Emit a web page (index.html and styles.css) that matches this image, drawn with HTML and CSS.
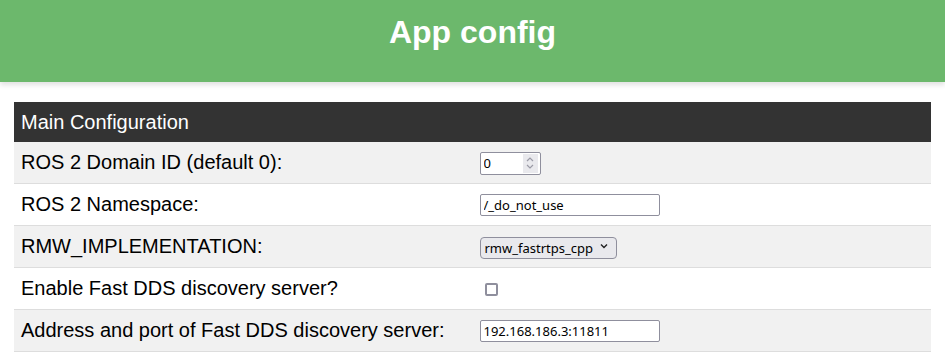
FILE: index.html
```html
<!DOCTYPE html>
<html lang="en">
<head>
    <meta charset="UTF-8">
    <meta name="viewport" content="width=device-width, initial-scale=1.0">
    <title>App config</title>
    <link rel="stylesheet" href="styles.css">
</head>
<body>
    <div class="header">
        <h1>App config</h1>
    </div>

    <div class="content">
        <table class="config">
            <tr>
                <th colspan="2">Main Configuration</th>
            </tr>
            <tr>
                <td>ROS 2 Domain ID (default 0):</td>
                <td>
                    <span class="numbox">
                        <input type="number" id="domain_id" value="0" class="num">
                        <span class="spin">
                            <svg width="10" height="16" viewBox="0 0 10 16">
                                <path d="M2 6 L5 3 L8 6" fill="none" stroke="#9a9aa6" stroke-width="1.2"/>
                                <path d="M2 10 L5 13 L8 10" fill="none" stroke="#9a9aa6" stroke-width="1.2"/>
                            </svg>
                        </span>
                    </span>
                </td>
            </tr>
            <tr>
                <td>ROS 2 Namespace:</td>
                <td><input type="text" id="namespace" value="/_do_not_use" class="txt"></td>
            </tr>
            <tr>
                <td>RMW_IMPLEMENTATION:</td>
                <td>
                    <span class="selbox">
                        <select id="rmw">
                            <option>rmw_fastrtps_cpp</option>
                            <option>rmw_cyclonedds_cpp</option>
                        </select>
                        <svg class="arrow" width="8" height="6" viewBox="0 0 8 6">
                            <path d="M1 1.5 L4 4.5 L7 1.5" fill="none" stroke="#222" stroke-width="1.4"/>
                        </svg>
                    </span>
                </td>
            </tr>
            <tr>
                <td>Enable Fast DDS discovery server?</td>
                <td><input type="checkbox" id="discovery" class="chk"></td>
            </tr>
            <tr>
                <td>Address and port of Fast DDS discovery server:</td>
                <td><input type="text" id="discovery_addr" value="192.168.186.3:11811" class="txt"></td>
            </tr>
        </table>
    </div>
</body>
</html>
```

FILE: styles.css
```css
/* Estilos principais */
body {
    font-family: "Liberation Sans", Arial, sans-serif;
    margin: 0;
    background: white;
}
.header {
    background-color: #6cb86c;
    height: 82px;
    padding-top: 14px;
    box-sizing: border-box;
    box-shadow: 0 3px 5px rgba(0, 0, 0, 0.12);
}
.header h1 {
    margin: 0;
    color: white;
    text-align: center;
    font-size: 32px;
}
.content {
    padding: 20px 14px 0 14px;
}
.config {
    width: 100%;
    border-collapse: collapse;
    font-size: 20px;
}
.config th {
    background: #333;
    color: white;
    font-weight: normal;
    text-align: left;
    padding: 0 7px;
    height: 40px;
}
.config td {
    width: 50%;
    padding: 0 7px;
    height: 41px;
    border-bottom: 1px solid #ddd;
    color: #000;
    vertical-align: middle;
}
.config tr:nth-child(even) td {
    background: #f1f1f1;
}

/* Campos do formulário */
input, select {
    font-family: "Noto Sans", "Open Sans", sans-serif;
    font-size: 13px;
    color: #000;
}
.txt {
    width: 180px;
    height: 22px;
    box-sizing: border-box;
    border: 1px solid #8f8f9d;
    border-radius: 2px;
    padding: 0 3px;
    background: white;
    vertical-align: middle;
}
.numbox {
    display: inline-flex;
    align-items: center;
    width: 61px;
    height: 23px;
    box-sizing: border-box;
    border: 1px solid #8f8f9d;
    border-radius: 2px;
    background: white;
    vertical-align: middle;
    padding-right: 2px;
}
.num {
    width: 36px;
    border: none;
    outline: none;
    padding: 0 3px;
    background: transparent;
    -moz-appearance: textfield;
}
.num::-webkit-inner-spin-button,
.num::-webkit-outer-spin-button {
    -webkit-appearance: none;
    margin: 0;
}
.spin {
    display: flex;
    align-items: center;
    justify-content: center;
    margin-left: auto;
    width: 18px;
    height: 19px;
    background: #e9e9ed;
}
.selbox {
    position: relative;
    display: inline-block;
    vertical-align: middle;
}
.selbox select {
    -webkit-appearance: none;
    appearance: none;
    width: 137px;
    height: 22px;
    box-sizing: border-box;
    border: 1px solid #8f8f9d;
    border-radius: 4px;
    background: #e9e9ed;
    padding: 0 18px 0 4px;
}
.selbox .arrow {
    position: absolute;
    right: 9px;
    top: 8px;
    pointer-events: none;
}
.chk {
    -webkit-appearance: none;
    appearance: none;
    width: 13px;
    height: 13px;
    box-sizing: border-box;
    border: 2px solid #8f8f9d;
    border-radius: 2px;
    background: white;
    margin: 0 0 0 5px;
    vertical-align: middle;
}
```
